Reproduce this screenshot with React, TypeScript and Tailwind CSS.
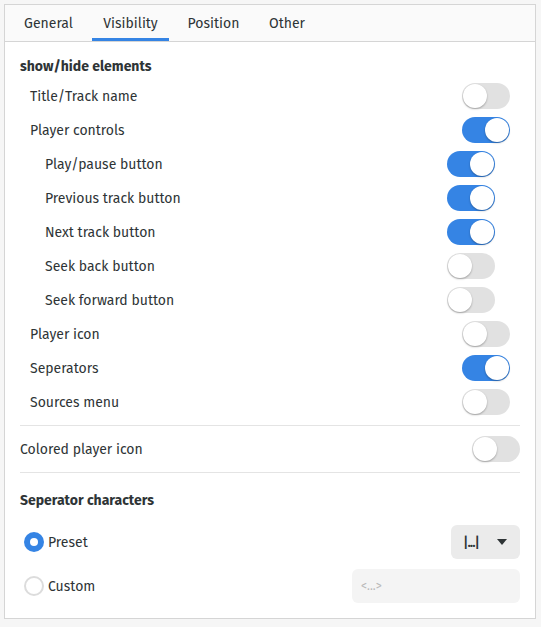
import { useState } from "react";

type Row = { label: string; on: boolean; sub?: boolean };

const rows: Row[] = [
  { label: "Title/Track name", on: false },
  { label: "Player controls", on: true },
  { label: "Play/pause button", on: true, sub: true },
  { label: "Previous track button", on: true, sub: true },
  { label: "Next track button", on: true, sub: true },
  { label: "Seek back button", on: false, sub: true },
  { label: "Seek forward button", on: false, sub: true },
  { label: "Player icon", on: false },
  { label: "Seperators", on: true },
  { label: "Sources menu", on: false },
];

const tabs = [
  { name: "General", w: "w-[71px]" },
  { name: "Visibility", w: "w-[77px]" },
  { name: "Position", w: "w-[73px]" },
  { name: "Other", w: "w-[58px]" },
];

function Toggle({ on }: { on: boolean }) {
  return (
    <div
      className={
        "relative h-[26px] w-[48px] shrink-0 rounded-full " +
        (on ? "bg-[#3584e4]" : "bg-[#e1e1e1]")
      }
    >
      <div
        className={
          "absolute top-[1px] h-[24px] w-[24px] rounded-full bg-white shadow-[0_1px_2px_rgba(0,0,0,0.3)] " +
          (on ? "left-[23px]" : "left-[1px]")
        }
      />
    </div>
  );
}

function Radio({ checked }: { checked: boolean }) {
  return checked ? (
    <div className="flex h-[20px] w-[20px] items-center justify-center rounded-full bg-[#3584e4]">
      <div className="h-[8px] w-[8px] rounded-full bg-white" />
    </div>
  ) : (
    <div className="h-[20px] w-[20px] rounded-full border-2 border-[#dcdcdc] bg-white" />
  );
}

export default function App() {
  const [tab, setTab] = useState("Visibility");
  return (
    <div
      className="min-h-[627px] bg-[#f6f6f6] p-[4px] text-[14px] text-[#2e3436]"
      style={{ fontFamily: '"Fira Sans", Lato, "Noto Sans", sans-serif' }}
    >
      <div className="flex h-[615px] w-[532px] flex-col border border-[#d5d5d5] bg-white">
        {/* tab strip */}
        <div className="flex h-[37px] shrink-0 gap-2 border-b border-[#d5d5d5] bg-[#fafafa] pl-2">
          {tabs.map((t) => (
            <button
              key={t.name}
              onClick={() => setTab(t.name)}
              className={
                "flex h-full items-center justify-center border-b-[3px] pt-[3px] " +
                t.w +
                (tab === t.name ? " border-[#3584e4]" : " border-transparent")
              }
            >
              {t.name}
            </button>
          ))}
        </div>

        <div className="flex flex-col px-[15px] pt-[15px]">
          <div className="h-[20px] font-bold leading-[20px]">show/hide elements</div>

          <div className="mt-[6px] flex flex-col gap-[8px] px-[10px]">
            {rows.map((r) => (
              <div
                key={r.label}
                className={"flex h-[26px] items-center justify-between " + (r.sub ? "px-[15px]" : "")}
              >
                <span>{r.label}</span>
                <Toggle on={r.on} />
              </div>
            ))}
          </div>

          <div className="mt-[10px] border-t border-[#e4e4e4]" />
          <div className="my-[10px] flex h-[26px] items-center justify-between">
            <span>Colored player icon</span>
            <Toggle on={false} />
          </div>
          <div className="border-t border-[#e4e4e4]" />

          <div className="mt-[18px] h-[20px] font-bold leading-[20px]">Seperator characters</div>

          <div className="mt-[14px] flex h-[34px] items-center justify-between pl-[4px]">
            <div className="flex items-center gap-[4px]">
              <Radio checked />
              <span>Preset</span>
            </div>
            <div className="flex h-[34px] w-[69px] items-center justify-between rounded-[6px] bg-[#ebebeb] pl-[12px] pr-[13px]">
              <span className="font-medium tracking-[-1px]">|...|</span>
              <svg width="10" height="6" viewBox="0 0 10 6">
                <path d="M0 0h10L5 6z" fill="#2e3436" />
              </svg>
            </div>
          </div>

          <div className="mt-[10px] flex h-[34px] items-center justify-between pl-[4px]">
            <div className="flex items-center gap-[4px]">
              <Radio checked={false} />
              <span>Custom</span>
            </div>
            <div className="flex h-[34px] w-[168px] items-center rounded-[6px] bg-[#f4f4f4] px-[9px] text-[12px] text-[#b9b9b9]">
              &lt;...&gt;
            </div>
          </div>
        </div>
      </div>
    </div>
  );
}
